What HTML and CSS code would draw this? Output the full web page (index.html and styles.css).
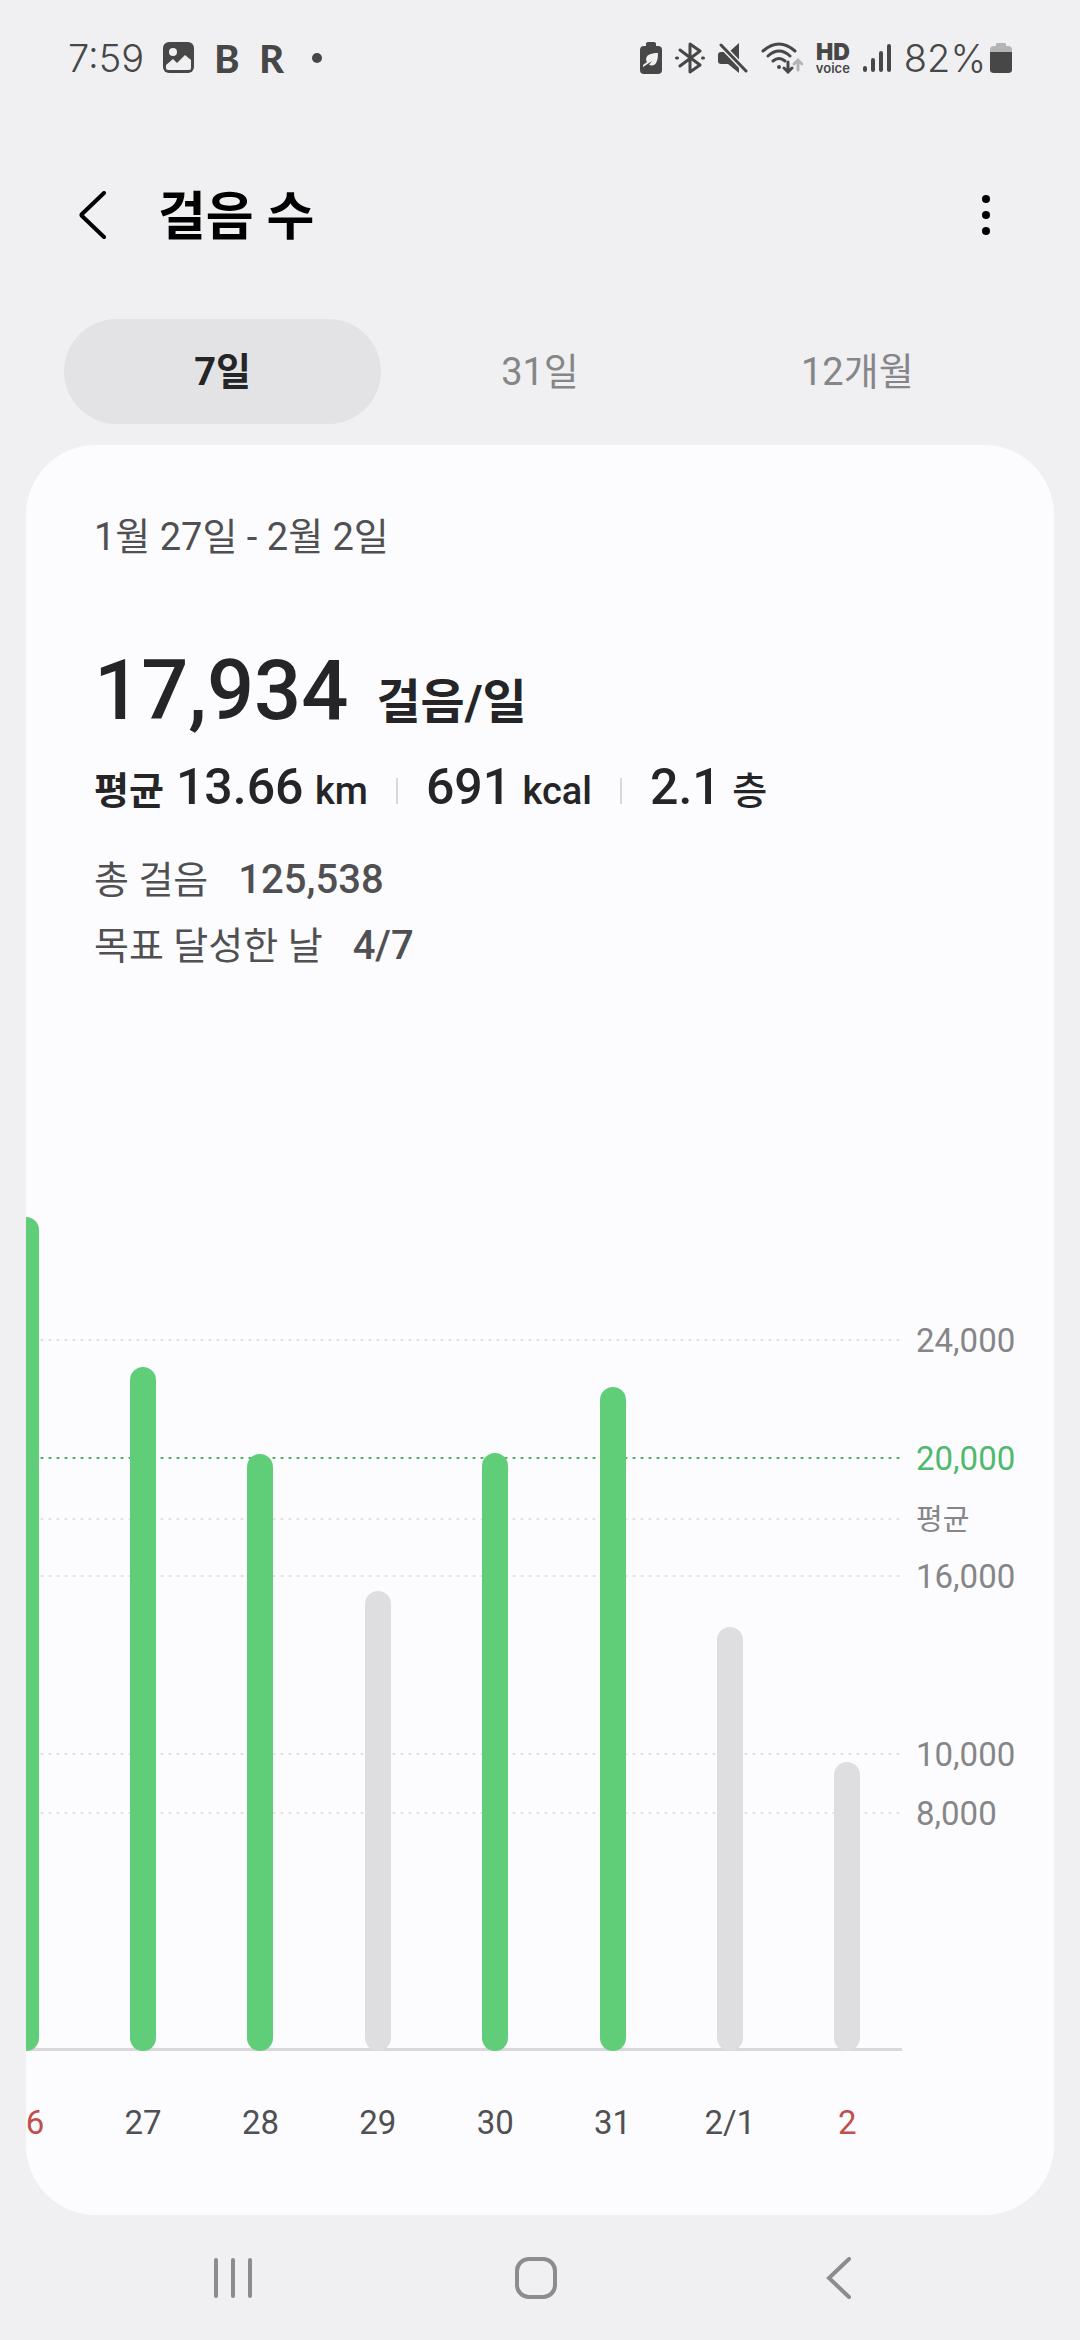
FILE: index.html
```html
<!DOCTYPE html>
<html lang="ko">
<head>
    <meta charset="UTF-8">
    <meta name="viewport" content="width=device-width, initial-scale=1.0">
    <title>걸음 수</title>
    <link rel="stylesheet" href="styles.css">
</head>
<body>
    <div class="status-bar">
        <div class="status-left">
            <span class="clock">7:59</span>
            <svg class="icon-image" width="32" height="32" viewBox="0 0 32 32">
                <rect x="0" y="0" width="31" height="31" rx="6" fill="#474747"/>
                <circle cx="10" cy="10" r="4" fill="#f0f0f2"/>
                <path d="M3 23 L10 17 L14 21 L22 13 L28 18 V26 Q28 28 26 28 H5 Q3 28 3 26 Z" fill="#f0f0f2"/>
            </svg>
            <span class="app-letter">B</span>
            <span class="app-letter">R</span>
            <span class="more-dot"></span>
        </div>
        <div class="status-right">
            <svg width="22" height="32" viewBox="0 0 22 32">
                <path d="M6 1.500 Q6 0 8 0 H14 Q16 0 16 1.500 V4 H18 Q22 4 22 8 V28 Q22 32 18 32 H4 Q0 32 0 28 V8 Q0 4 4 4 H6 Z" fill="#474747"/>
                <path d="M18 11 C10 11 6 13 6 18 L7 20 L3 23 V25 L12 19 L9 23 C15 25 18 21 18 11 Z" fill="#f0f0f2"/>
            </svg>
            <svg width="30" height="32" viewBox="0 0 30 32" fill="none" stroke="#474747" stroke-width="3" stroke-linejoin="round" stroke-linecap="round">
                <path d="M5 8 L25 23 L15 30 V2 L25 9 L5 24"/>
                <path d="M1.500 16 H2.500 M27.500 16 H28.500"/>
            </svg>
            <svg width="30" height="32" viewBox="0 0 30 32">
                <path d="M11 10 L21 1 V22 Z M0 13 Q0 10 3 10 H9 L21 23 V31 L10 22 H3 Q0 22 0 19 Z" fill="#474747"/>
                <path d="M3 3 L28 29" stroke="#f0f0f2" stroke-width="6"/>
                <path d="M3 3 L28 29" stroke="#474747" stroke-width="3" stroke-linecap="round"/>
            </svg>
            <svg width="42" height="32" viewBox="0 0 42 32" fill="none" stroke="#474747" stroke-width="3" stroke-linecap="round">
                <path d="M2 9 Q18 -5 34 9 M7 14 Q18 4 29 14 M12 19 Q18 14 24 19"/>
                <circle cx="18" cy="25" r="2" fill="#474747" stroke="none"/>
                <path d="M27 20 V30 M23 26 L27 30 L31 26"/>
                <path d="M37 28 V18 M33 22 L37 18 L41 22" stroke="#b4b4b6"/>
            </svg>
            <span class="hd-voice"><b>HD</b><span>voice</span></span>
            <svg width="28" height="32" viewBox="0 0 28 32" stroke="#474747" stroke-width="4" stroke-linecap="round">
                <path d="M2 26 V28 M10 18 V28 M18 11 V28 M26 4 V28"/>
            </svg>
            <span class="battery">
                <span>82%</span>
                <svg width="22" height="32" viewBox="0 0 22 32">
                    <path d="M0 10 V8 Q0 4 4 4 H6 V2 Q6 1 8 1 H14 Q16 1 16 2 V4 H18 Q22 4 22 8 V10 Z" fill="#b4b4b6"/>
                    <path d="M0 10 H22 V28 Q22 31 18 31 H4 Q0 31 0 28 Z" fill="#474747"/>
                </svg>
            </span>
        </div>
    </div>

    <header class="app-bar">
        <button class="icon-button" type="button" aria-label="뒤로">
            <svg width="28" height="48" viewBox="0 0 28 48" fill="none" stroke="#000" stroke-width="4" stroke-linecap="round" stroke-linejoin="round">
                <path d="M25 2 L3 23 Q2 24 3 25 L25 46"/>
            </svg>
        </button>
        <h1>걸음 수</h1>
        <button class="icon-button menu-button" type="button" aria-label="더보기">
            <svg width="10" height="42" viewBox="0 0 10 42">
                <circle cx="5" cy="5" r="4"/>
                <circle cx="5" cy="21" r="4"/>
                <circle cx="5" cy="37" r="4"/>
            </svg>
        </button>
    </header>

    <div class="tabs" role="tablist">
        <button class="tab active" type="button" role="tab" aria-selected="true">7일</button>
        <button class="tab" type="button" role="tab" aria-selected="false">31일</button>
        <button class="tab" type="button" role="tab" aria-selected="false">12개월</button>
    </div>

    <main class="card">
        <section class="summary">
            <p class="period">1월 27일 - 2월 2일</p>
            <p class="average"><span class="average-value">17,934</span><span class="average-unit">걸음/일</span></p>
            <div class="stats">
                <span class="stats-label">평균</span>
                <span class="stat"><b>13.66</b> km</span>
                <span class="divider"></span>
                <span class="stat"><b>691</b> kcal</span>
                <span class="divider"></span>
                <span class="stat"><b>2.1</b> 층</span>
            </div>
            <p class="total">총 걸음<b>125,538</b></p>
            <p class="total">목표 달성한 날<b>4/7</b></p>
        </section>

        <section class="chart">
            <div class="plot">
                <!-- grid lines, the full height is 30,000 steps -->
                <div class="line" style="--steps: 24000"></div>
                <div class="line goal" style="--steps: 20000"></div>
                <div class="line" style="--steps: 17934"></div>
                <div class="line" style="--steps: 16000"></div>
                <div class="line" style="--steps: 10000"></div>
                <div class="line" style="--steps: 8000"></div>
                <div class="line base" style="--steps: 0"></div>
                <div class="columns bars">
                    <div class="bar reached" style="--steps: 28176"></div>
                    <div class="bar reached" style="--steps: 23108"></div>
                    <div class="bar reached" style="--steps: 20169"></div>
                    <div class="bar" style="--steps: 15541"></div>
                    <div class="bar reached" style="--steps: 20203"></div>
                    <div class="bar reached" style="--steps: 22432"></div>
                    <div class="bar" style="--steps: 14324"></div>
                    <div class="bar" style="--steps: 9761"></div>
                </div>
            </div>
            <div class="axis">
                <span style="--steps: 24000">24,000</span>
                <span class="goal-label" style="--steps: 20000">20,000</span>
                <span class="average-label" style="--steps: 17934">평균</span>
                <span style="--steps: 16000">16,000</span>
                <span style="--steps: 10000">10,000</span>
                <span style="--steps: 8000">8,000</span>
            </div>
            <div class="dates">
                <div class="columns">
                    <span class="sunday">26</span>
                    <span>27</span>
                    <span>28</span>
                    <span>29</span>
                    <span>30</span>
                    <span>31</span>
                    <span>2/1</span>
                    <span class="sunday">2</span>
                </div>
            </div>
        </section>
    </main>

    <nav class="nav-bar">
        <button type="button" aria-label="최근 앱">
            <svg width="42" height="42" viewBox="0 0 42 42" stroke="#8c8c8c" stroke-width="4" stroke-linecap="round">
                <path d="M4 3 V39 M21 3 V39 M38 3 V39"/>
            </svg>
        </button>
        <button type="button" aria-label="홈">
            <svg width="42" height="42" viewBox="0 0 42 42" fill="none" stroke="#8c8c8c" stroke-width="4">
                <rect x="2" y="2" width="38" height="38" rx="12"/>
            </svg>
        </button>
        <button type="button" aria-label="뒤로">
            <svg width="42" height="42" viewBox="0 0 42 42" fill="none" stroke="#8c8c8c" stroke-width="4" stroke-linecap="round">
                <path d="M31 2 L11 21 L31 40"/>
            </svg>
        </button>
    </nav>
</body>
</html>
```
FILE: styles.css
```css
* {
    box-sizing: border-box;
}
body {
    margin: 0;
    background-color: #f0f0f2;
    color: #252527;
    font-family: Roboto, "Noto Sans CJK KR", sans-serif;
}
h1, p {
    margin: 0;
}
button {
    padding: 0;
    border: none;
    background: none;
    color: inherit;
    font: inherit;
    cursor: pointer;
}
svg {
    display: block;
}

/* Status bar */
.status-bar {
    display: flex;
    justify-content: space-between;
    height: 116px;
    padding: 0 68px;
    color: #474747;
    font-family: Inter, sans-serif;
    font-size: 38px;
    line-height: 114px;
    font-weight: 300;
}
.status-left, .status-right, .battery {
    display: flex;
    align-items: center;
}
.status-left {
    gap: 19px;
}
.status-right {
    gap: 13px;
}
.battery {
    gap: 4px;
}
.app-letter {
    width: 26px;
    font-family: Lato, sans-serif;
    font-weight: 900;
}
.more-dot {
    width: 10px;
    height: 10px;
    margin-left: 8px;
    border-radius: 50%;
    background-color: #474747;
}
.hd-voice {
    display: flex;
    flex-direction: column;
    align-items: center;
    font-size: 13px;
    line-height: 12px;
    font-weight: 600;
}
.hd-voice b {
    font-size: 23px;
    line-height: 20px;
}

/* App bar */
.app-bar {
    display: flex;
    align-items: center;
    height: 203px;
    padding: 0 70px 6px 69px;
}
h1 {
    padding-top: 6px;
    margin-left: 41px;
    color: #000;
    font-size: 52px;
    line-height: 76px;
    font-weight: 700;
}
.icon-button {
    display: flex;
    justify-content: center;
    width: 48px;
}
.menu-button {
    margin-left: auto;
}

/* Tabs */
.tabs {
    display: grid;
    grid-template-columns: repeat(3, 1fr);
    padding: 0 64px;
}
.tab {
    height: 105px;
    padding-bottom: 6px;
    border-radius: 53px;
    color: #868688;
    font-size: 38px;
}
.tab.active {
    background-color: #e3e3e5;
    color: #252527;
    font-weight: 700;
}

/* Card */
.card {
    margin: 21px 26px 0;
    padding-bottom: 68px;
    border-radius: 70px;
    background-color: #fcfcfe;
    overflow: hidden;
}
.summary {
    padding: 64px 68px 0;
    color: #505052;
    font-size: 38px;
    line-height: 56px;
}
.average {
    display: flex;
    align-items: baseline;
    gap: 28px;
    margin-top: 78px;
    color: #252527;
    line-height: 96px;
    font-weight: 500;
}
.average-value {
    font-size: 83px;
}
.average-unit {
    font-size: 48px;
    font-weight: 700;
}
.stats {
    display: flex;
    align-items: baseline;
    gap: 28px;
    color: #252527;
    line-height: 72px;
    font-weight: 500;
}
.stats b {
    margin-right: 2px;
    font-size: 50px;
    font-weight: 500;
}
.stats-label {
    margin-right: -16px;
    font-weight: 700;
}
.divider {
    width: 2px;
    height: 26px;
    background-color: #d8d8da;
}
.total {
    line-height: 66px;
}
.total b {
    margin-left: 30px;
    font-size: 40px;
    font-weight: 500;
}
.stats + .total {
    margin-top: 20px;
}

/* Chart */
.chart {
    display: grid;
    grid-template-columns: 1fr 138px;
    column-gap: 14px;
    margin-top: 184px;
}
.plot {
    position: relative;
    height: 888px;
}
.plot, .dates {
    overflow: hidden;
}
.columns {
    display: grid;
    grid-template-columns: repeat(8, 1fr);
    justify-items: center;
    margin: 0 -4px 0 -59px;
}
.bars {
    position: relative;
    height: 100%;
    align-items: end;
}
.bar {
    width: 26px;
    height: calc(var(--steps) / 30000 * 100%);
    border-radius: 13px;
    background-color: #dedee0;
}
.bar.reached {
    background-color: #60ce79;
}
.line {
    position: absolute;
    bottom: calc(var(--steps) / 30000 * 100%);
    left: 0;
    right: 0;
    height: 2px;
    background: radial-gradient(circle, #e2e2e4 1px, transparent 2px) right / 8px 2px repeat-x;
}
.line.goal {
    background-image: radial-gradient(circle, #4fb06b 1px, transparent 2px);
}
.line.base {
    height: 3px;
    background: #d8d8da;
}
.axis {
    position: relative;
    color: #868688;
    font-size: 33px;
    line-height: 48px;
}
.axis span {
    position: absolute;
    bottom: calc(var(--steps) / 30000 * 100%);
    left: 0;
    margin-bottom: -24px;
}
.axis .goal-label {
    color: #50b96c;
}
.axis .average-label {
    font-size: 29px;
}
.dates {
    margin-top: 48px;
    color: #505052;
    font-size: 33px;
    line-height: 48px;
}
.sunday {
    color: #c0504a;
}

/* Navigation bar */
.nav-bar {
    display: grid;
    grid-template-columns: repeat(3, 1fr);
    padding: 0 90px 0 82px;
}
.nav-bar button {
    display: flex;
    justify-content: center;
    align-items: center;
    height: 126px;
}
```
